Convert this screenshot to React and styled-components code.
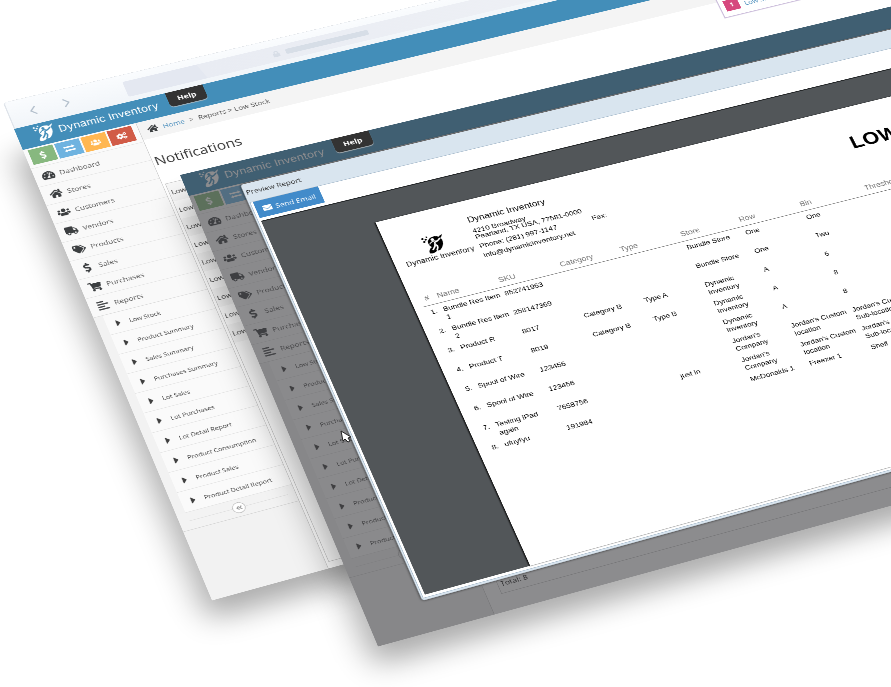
import React from "react";
import styled, { createGlobalStyle, css } from "styled-components";
import {
  FaTachometerAlt, FaHome, FaUsers, FaTruck, FaTags, FaDollarSign, FaShoppingCart,
  FaAlignLeft, FaCogs, FaEnvelope, FaCaretRight, FaChevronLeft,
  FaChevronRight, FaAngleDoubleLeft, FaLock,
} from "react-icons/fa";

const GlobalStyle = createGlobalStyle`
  *, *::before, *::after { box-sizing: border-box; }
  body { margin: 0; background: #fff; font-family: "Open Sans", sans-serif; font-size: 13px; color: #393939; }
  ul { list-style: none; margin: 0; padding: 0; }
  a { color: inherit; text-decoration: none; }
  button { font: inherit; border: 0; padding: 0; }
`;

const Stage = styled.main`
  position: relative;
  min-height: 100vh;
  overflow: hidden;
`;

/* Windows lie on one tilted plane, seen in perspective from their top-left corner. */
const tilted = css`
  position: absolute;
  transform-origin: 0 0;
`;

const AppWindow = styled.section`
  ${tilted}
  left: ${(p) => p.$x}px;
  top: ${(p) => p.$y}px;
  width: 1800px;
  height: 990px;
  transform: matrix3d(0.6, -0.1422, 0, 0.0000426, 0.1911, 0.455, 0, -0.000045, 0, 0, 1, 0, 0, 0, 0, 1);
  box-shadow: -26px 44px 48px -10px rgba(0, 0, 0, 0.32);
  display: flex;
  flex-direction: column;
  background: #fff;
`;

const Chrome = styled.div`
  position: absolute;
  left: 0;
  right: 0;
  bottom: 100%;
  height: 58px;
  display: flex;
  align-items: center;
  padding: 0 0 0 28px;
  background: linear-gradient(#fafcfe, #f1f5f9);
  border-top: 1px dashed #e3e5e8;
  border-left: 2px solid #dfe4ea;
  border-radius: 6px 0 0 0;
`;

const ChromeButton = styled.button`
  width: 56px;
  text-align: left;
  background: none;
  color: #b3bfcc;
  font-size: 22px;
  line-height: 0;
  svg { stroke: #f6f9fb; stroke-width: 26px; }
`;

const Address = styled.div`
  display: flex;
  align-items: center;
  gap: 10px;
  width: 1050px;
  height: 33px;
  margin: 4px 0 0 54px;
  padding-left: 252px;
  border-radius: 4px;
  background: linear-gradient(75deg, #e4e8f1 0 130px, #e9ecf3 131px, #f0f2f6 1000px);
  color: #d8dee7;
`;

const AddressText = styled.span`
  width: 144px;
  height: 11px;
  border-radius: 3px;
  background: #d7dee7;
`;

const Header = styled.header`
  display: flex;
  flex: none;
  height: 46px;
  padding-left: 28px;
  background: #438eb9;
  color: #fff;
`;

const Brand = styled.a`
  display: flex;
  align-items: center;
  gap: 6px;
  width: 226px;
  padding-bottom: 4px;
  font: 19px Inter, sans-serif;
  white-space: nowrap;
`;

const HelpTab = styled.a`
  position: relative;
  z-index: 3;
  width: 64px;
  height: 31px;
  background: #333;
  border-radius: 0 0 7px 7px;
  box-shadow: 0 2px 1px rgba(190, 190, 190, 0.7);
  color: #fff;
  font: bold 14px/32px "Open Sans", sans-serif;
  text-align: center;
`;

const Body = styled.div`
  display: flex;
  flex: 1;
`;

const Sidebar = styled.nav`
  flex: none;
  width: 190px;
  background: #f2f2f2;
  border-right: 1px solid #ccc;
`;

const Shortcuts = styled.div`
  display: flex;
  gap: 3px;
  height: 41px;
  padding: 3px 0 6px 7px;
  background: #fafafa;
`;

const Shortcut = styled.button`
  width: 41px;
  height: 32px;
  background: ${(p) => p.$color};
  color: #fff;
  font-size: 17px;
  line-height: 0;
`;

const MenuLink = styled.a`
  display: flex;
  align-items: center;
  gap: 8px;
  height: 40px;
  padding-left: 12px;
  background: #f9f9f9;
  border-top: 1px solid #e5e5e5;
  color: #585858;
  svg { width: 21px; font-size: 20px; color: #3c3f41; }
`;

const Submenu = styled.ul`
  border-top: 1px solid #dcdcdc;
`;

const SubLink = styled.a`
  display: flex;
  align-items: center;
  gap: 13px;
  height: 41px;
  margin-left: 15px;
  padding: 2px 0 0 15px;
  background: #fafafa;
  border-bottom: 1px solid #e4e4e4;
  color: #404040;
  font-size: 11px;
  svg { font-size: 20px; width: 9px; }
`;

const Collapse = styled.div`
  display: flex;
  align-items: center;
  height: 34px;
  padding: 0 12px 0 16px;
  background: #f3f3f3;
  border-bottom: 1px solid #d5d5d5;
  &::before, &::after { content: ""; flex: 1; height: 1px; background: #e0e0e0; }
`;

const CollapseButton = styled.button`
  display: grid;
  place-items: center;
  width: 21px;
  height: 21px;
  border: 1px solid #aaa;
  border-radius: 50%;
  background: #fff;
  color: #999;
  font-size: 12px;
`;

const Content = styled.div`
  flex: 1;
  display: flex;
  flex-direction: column;
`;

const Breadcrumbs = styled.nav`
  display: flex;
  align-items: center;
  gap: 8px;
  height: 38px;
  padding: 0 0 1px 13px;
  background: #f4f4f4;
  color: #555;
  svg { font-size: 18px; color: #3c3f41; }
`;

const Crumb = styled.a`
  color: #4c8fbd;
`;

const PageTitle = styled.h1`
  margin: 28px 0 31px 3px;
  font-size: 25px;
  font-weight: 400;
  line-height: 38px;
  color: #393939;
`;

const ListFrame = styled.div`
  flex: 1;
  display: flex;
  flex-direction: column;
  justify-content: space-between;
  margin: 0 24px ${(p) => p.$bottom}px ${(p) => p.$left}px;
  border: 1px solid #c8c8c8;
`;

const ListRow = styled.li`
  height: 38px;
  padding-left: 3px;
  line-height: 38px;
  background: ${(p) => (p.$odd ? "#f7f7f7" : "#fff")};
`;

const Total = styled.div`
  padding: 0 0 8px 4px;
  line-height: 20px;
  color: #000;
`;

const Alert = styled.aside`
  position: absolute;
  left: 1200px;
  top: 49px;
  display: flex;
  align-items: flex-end;
  gap: 9px;
  width: 240px;
  height: 72px;
  padding: 0 0 11px 8px;
  border: 2px solid #cdbfdc;
  background: #fff;
  color: #4c8fbd;
`;

const Badge = styled.b`
  width: 26px;
  height: 24px;
  background: #d6487e;
  color: #fff;
  font-size: 12px;
  line-height: 24px;
  text-align: center;
`;

const Dim = styled.div`
  position: absolute;
  inset: 0;
  z-index: 2;
  background: rgba(63, 64, 66, 0.6);
`;

const Modal = styled.section`
  ${tilted}
  left: 240px;
  top: 185px;
  width: 1300px;
  height: 875px;
  display: flex;
  flex-direction: column;
  transform: matrix3d(0.6, -0.1434, 0, 0.0000463, 0.1992, 0.455, 0, -0.000049, 0, 0, 1, 0, 0, 0, 0, 1);
  background: #d9e5ef;
  border-left: 1px solid #8f979e;
  border-bottom: 1px solid #b3bdc6;
  border-radius: 5px 0 0 5px;
  box-shadow: 0 0 4px rgba(0, 0, 0, 0.7);
`;

const ModalTitle = styled.h2`
  margin: 0;
  padding-left: 3px;
  height: 40px;
  font-size: 13px;
  font-weight: 400;
  line-height: 36px;
  color: #333;
`;

const ModalBody = styled.div`
  flex: 1;
  display: flex;
  flex-direction: column;
  margin: 0 0 4px 3px;
  padding: 0 0 5px 4px;
  background: #fff;
  box-shadow: 0 0 0 1px #a9bccd;
`;

const SendButton = styled.button`
  display: flex;
  align-items: center;
  gap: 6px;
  width: 109px;
  height: 35px;
  margin-bottom: 6px;
  padding: 0 0 0 11px;
  background: #428bca;
  color: #fff;
  svg { font-size: 15px; }
`;

const Viewer = styled.div`
  flex: 1;
  padding: 56px 0 0 172px;
  background: #525659;
  border-top: 2px solid #25282a;
`;

const Paper = styled.article`
  height: 100%;
  background: #fff;
  box-shadow: -2px 0 2px #111;
  font: 13px/17px "Liberation Sans", Arial, sans-serif;
  color: #000;
`;

const PaperHead = styled.header`
  display: grid;
  grid-template-columns: 114px 187px 459px 1fr;
  column-gap: 8px;
  height: 165px;
  padding-left: 18px;
`;

const PaperLogo = styled.div`
  padding-top: 52px;
  text-align: center;
  font: 13px/18px Inter, sans-serif;
  white-space: nowrap;
  svg { display: block; margin: 0 auto; }
`;

const CompanyAddress = styled.address`
  display: flex;
  flex-direction: column;
  gap: 7px;
  padding: 31px 0 0 2px;
  font-style: normal;
  line-height: 13px;
  white-space: nowrap;
`;

const Company = styled.span`
  font-size: 16px;
  line-height: 20px;
`;

const Fax = styled.span`
  padding-top: 91px;
  line-height: 13px;
`;

const PaperTitle = styled.h2`
  margin: 56px 0 0;
  font-size: 37px;
  line-height: 40px;
  font-weight: 700;
  white-space: nowrap;
`;

const Report = styled.table`
  width: calc(100% - 15px);
  margin-left: 15px;
  table-layout: fixed;
  border-collapse: collapse;
  th {
    padding: 0 0 6px 7px;
    border-bottom: 1px solid #777;
    font-size: 14px;
    font-weight: 400;
    text-align: left;
    color: #777;
  }
  td {
    height: 41px;
    padding: 5px 0 0 7px;
    vertical-align: top;
  }
`;

const Cell = styled.div`
  height: 36px;
  margin-right: -3px;
`;

const Cursor = styled.svg`
  position: absolute;
  left: 340px;
  top: 430px;
`;

function Logo({ size, ink, gap }) {
  return (
    <svg width={size} height={size} viewBox="0 0 40 40" aria-hidden="true">
      <path d="M12 9C18 2 30 2 34 11c3 9-1 18-8 24-2 2-5 2-7 0l-3 3c-4 2-9 2-11 0 0-6 3-10 8-12-4-5-5-11-1-17z" fill={ink} />
      <path d="M11 19c4-4 9-6 13-4" fill="none" stroke={gap} strokeWidth="2" />
      <circle cx="19" cy="10" r="3" fill={gap} />
      <path d="M21 16c0 7-3 11-9 17" fill="none" stroke={gap} strokeWidth="3" />
      <path d="M21 23c3 3 2 7-2 12" fill="none" stroke={gap} strokeWidth="3" />
      <path d="M22 17c6-1 10-5 14-10" fill="none" stroke={gap} strokeWidth="3" />
      <path d="M33 11c3-2 5-5 6-8-4 2-6 3-8 5z" fill={ink} />
      <circle cx="3" cy="4" r="2" fill={ink} />
      <circle cx="8" cy="7" r="2" fill={ink} />
      <circle cx="4" cy="11" r="2" fill={ink} />
      <circle cx="11" cy="2" r="1.500" fill={ink} />
    </svg>
  );
}

function TransferIcon() {
  return (
    <svg width="22" height="18" viewBox="0 0 22 18" fill="currentColor" aria-hidden="true">
      <path d="M2 4h14V2l4 3.500-4 3V7H2z" />
      <path d="M20 11H6V9.500l-4 3.500 4 3v-2h14z" />
    </svg>
  );
}

const MENU = [
  ["Dashboard", FaTachometerAlt], ["Stores", FaHome], ["Customers", FaUsers], ["Vendors", FaTruck],
  ["Products", FaTags], ["Sales", FaDollarSign], ["Purchases", FaShoppingCart], ["Reports", FaAlignLeft],
];

const REPORTS = [
  "Low Stock", "Product Summary", "Sales Summary", "Purchases Summary", "Lot Sales",
  "Lot Purchases", "Lot Detail Report", "Product Consumption", "Product Sales", "Product Detail Report",
];

const SHORTCUTS = [
  ["Sales", "#87b87f", FaDollarSign], ["Transfers", "#6fb3e0", TransferIcon],
  ["Customers", "#ffb752", FaUsers], ["Settings", "#d15b47", FaCogs],
];

const COLUMNS = [
  ["#", 21], ["Name", 104], ["SKU", 105], ["Category", 104], ["Type", 105],
  ["Store", 103], ["Row", 108], ["Bin", 116], ["Threshold", undefined],
];

const ROWS = [
  ["Bundle Res Item 1", "852741963", "", "", "Bundle Store", "One", "One"],
  ["Bundle Res Item 2", "258147369", "", "", "Bundle Store", "One", "Two"],
  ["Product R", "8017", "Category B", "Type A", "Dynamic Inventory", "A", "6"],
  ["Product T", "8019", "Category B", "Type B", "Dynamic Inventory", "A", "8"],
  ["Spool of Wire", "123456", "", "", "Dynamic Inventory", "A", "8"],
  ["Spool of Wire", "123456", "", "", "Jordan's Company", "Jordan's Custom location", "Jordan's Custom Sub-location"],
  ["Testing iPad again", "7658756", "", "just in", "Jordan's Company", "Jordan's Custom location", "Jordan's Custom Sub-location"],
  ["ufuyfyu", "191984", "", "", "McDonalds 1", "Freezer 1", "Shelf"],
];

function InventoryWindow({ x, y, dimmed, chrome, frameLeft, frameBottom }) {
  return (
    <AppWindow $x={x} $y={y}>
      {chrome && (
        <Chrome>
          <ChromeButton aria-label="Back"><FaChevronLeft /></ChromeButton>
          <ChromeButton aria-label="Forward"><FaChevronRight /></ChromeButton>
          <Address><FaLock /><AddressText /></Address>
        </Chrome>
      )}
      <Header>
        <Brand href="#home"><Logo size={34} ink="#fff" gap="#438eb9" />Dynamic Inventory</Brand>
        <HelpTab href="#help">Help</HelpTab>
      </Header>
      <Body>
        <Sidebar>
          <Shortcuts>
            {SHORTCUTS.map(([label, color, Icon]) => (
              <Shortcut key={label} aria-label={label} $color={color}><Icon /></Shortcut>
            ))}
          </Shortcuts>
          <ul>
            {MENU.map(([label, Icon]) => (
              <li key={label}><MenuLink href="#menu"><Icon />{label}</MenuLink></li>
            ))}
          </ul>
          <Submenu>
            {REPORTS.map((label) => (
              <li key={label}><SubLink href="#report"><FaCaretRight />{label}</SubLink></li>
            ))}
          </Submenu>
          <Collapse><CollapseButton aria-label="Collapse menu"><FaAngleDoubleLeft /></CollapseButton></Collapse>
        </Sidebar>
        <Content>
          <Breadcrumbs>
            <FaHome /><Crumb href="#home">Home</Crumb><span>&gt;</span><span>Reports &gt; Low Stock</span>
          </Breadcrumbs>
          <PageTitle>Notifications</PageTitle>
          <ListFrame $left={frameLeft} $bottom={frameBottom}>
            <ul>
              {Array.from({ length: 9 }, (_, i) => <ListRow key={i} $odd={i % 2 === 0}>Low Stock</ListRow>)}
            </ul>
            {dimmed && <Total>Total: 8</Total>}
          </ListFrame>
        </Content>
      </Body>
      {!dimmed && <Alert><Badge>1</Badge>Low Stock</Alert>}
      {dimmed && <Dim />}
    </AppWindow>
  );
}

function PreviewReport() {
  return (
    <Modal role="dialog" aria-label="Preview Report">
      <ModalTitle>Preview Report</ModalTitle>
      <ModalBody>
        <SendButton><FaEnvelope />Send Email</SendButton>
        <Viewer>
          <Paper>
            <PaperHead>
              <PaperLogo><Logo size={37} ink="#000" gap="#fff" />Dynamic Inventory</PaperLogo>
              <CompanyAddress>
                <Company>Dynamic Inventory</Company>
                <span>4210 Broadway<br />Pearland, TX USA, 77581-0000</span>
                <span>Phone: (281) 997-1147</span>
                <span>info@dynamicinventory.net</span>
              </CompanyAddress>
              <Fax>Fax:</Fax>
              <PaperTitle>LOW STOCK</PaperTitle>
            </PaperHead>
            <Report>
              <colgroup>{COLUMNS.map(([name, w]) => <col key={name} width={w} />)}</colgroup>
              <thead><tr>{COLUMNS.map(([name]) => <th key={name}>{name}</th>)}</tr></thead>
              <tbody>
                {ROWS.map((row, i) => (
                  <tr key={i}>
                    <td><Cell>{i + 1}.</Cell></td>
                    {row.map((text, j) => <td key={j}><Cell>{text}</Cell></td>)}
                  </tr>
                ))}
              </tbody>
            </Report>
          </Paper>
        </Viewer>
      </ModalBody>
    </Modal>
  );
}

export default function App() {
  return (
    <Stage>
      <GlobalStyle />
      <InventoryWindow x={14} y={129} chrome frameLeft={4} frameBottom={12} />
      <InventoryWindow x={180} y={175} dimmed frameLeft={23} frameBottom={34} />
      <PreviewReport />
      <Cursor width="12" height="14" viewBox="0 0 12 14" aria-hidden="true">
        <path d="M1 1l2 10 2-2 3 3 2-1-2-3 3-1z" fill="#fff" stroke="#222" />
      </Cursor>
    </Stage>
  );
}
